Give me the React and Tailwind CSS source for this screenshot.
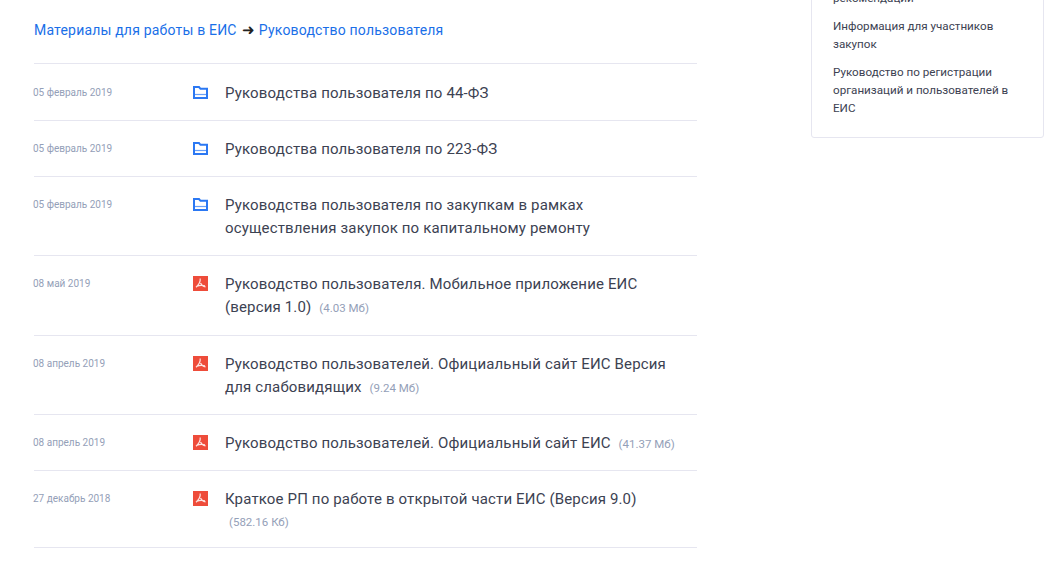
import React from 'react';

const rows = [
  { date: '05 февраль 2019', type: 'folder', title: 'Руководства пользователя по 44-ФЗ', pad: 'pt-[18px] pb-[15px]' },
  { date: '05 февраль 2019', type: 'folder', title: 'Руководства пользователя по 223-ФЗ', pad: 'pt-[17px] pb-[16px]' },
  {
    date: '05 февраль 2019',
    type: 'folder',
    title: 'Руководства пользователя по закупкам в рамках осуществления закупок по капитальному ремонту',
    pad: 'pt-[17px] pb-[16px]',
  },
  { date: '08 май 2019', type: 'pdf', title: 'Руководство пользователя. Мобильное приложение ЕИС (версия 1.0)', size: '(4.03 Мб)', pad: 'pt-[17px] pb-[17px]' },
  { date: '08 апрель 2019', type: 'pdf', title: 'Руководство пользователей. Официальный сайт ЕИС Версия для слабовидящих', size: '(9.24 Мб)', pad: 'pt-[17px] pb-[16px]' },
  { date: '08 апрель 2019', type: 'pdf', title: 'Руководство пользователей. Официальный сайт ЕИС', size: '(41.37 Мб)', pad: 'pt-[17px] pb-[15px]' },
  { date: '27 декабрь 2018', type: 'pdf', title: 'Краткое РП по работе в открытой части ЕИС (Версия 9.0)', size: '(582.16 Кб)', pad: 'pt-[17px] pb-[14px]' },
];

const FolderIcon = () => (
  <svg width="15" height="13" viewBox="0 0 15 13" fill="none">
    <path d="M1 1h5l1.500 1.800H14V12H1z" stroke="#2b78f3" strokeWidth="2" />
    <path d="M1 8.500h13" stroke="#2b78f3" strokeWidth="1.200" opacity="0.7" />
  </svg>
);

const PdfIcon = () => (
  <svg width="15" height="15" viewBox="0 0 15 15">
    <rect width="15" height="15" fill="#ee4c3a" />
    <path d="M7.200 2.500c.4 3 -1.300 6 -4.200 8.800M7.500 7c1 2.200 2.500 3.500 5 3.800M3.500 10.500c2.500-1.300 5.500-1.500 8.500-.7" fill="none" stroke="#fff" strokeWidth="1.200" opacity="0.85" />
  </svg>
);

export default function App() {
  return (
    <div className="h-[569px] w-[1047px] overflow-hidden bg-white font-['Roboto',sans-serif]">
      <div className="flex items-start pl-[34px]">
        <main className="w-[663px] pt-[21px]">
          <div className="flex items-center text-[14px] leading-[18px] tracking-[0.19px] text-[#1a6fe8]">
            <a>Материалы для работы в ЕИС</a>
            <span className="ml-[5px] mr-[4px] text-[15px] leading-[18px] text-[#222]">➜</span>
            <a>Руководство пользователя</a>
          </div>
          <div className="mt-[24px] border-b border-[#e6e6f0]">
            {rows.map((row) => (
              <div key={row.title} className={`flex border-t border-[#e6e6f0] ${row.pad}`}>
                <div className="-ml-px w-[160px] pt-[4px] text-[10px] leading-[14px] text-[#94a0b8]">{row.date}</div>
                <div className={row.type === 'folder' ? 'w-[32px] pt-[4px]' : 'w-[32px] pt-[3px]'}>
                  {row.type === 'folder' ? <FolderIcon /> : <PdfIcon />}
                </div>
                <div className="w-[450px] text-[15px] leading-[22.5px] tracking-[0.15px] text-[#3c4252]">
                  {row.title}{' '}
                  {row.size && <span className="ml-[4px] text-[11.5px] leading-none tracking-normal text-[#94a0b8]">{row.size}</span>}
                </div>
              </div>
            ))}
          </div>
        </main>
        <aside className="ml-[114px] -mt-[12px] h-[150px] w-[233px] rounded-[3px] border border-[#e6e6f0] px-[21px] text-[11.65px] leading-[18px] text-[#3c4252]">
          <p>рекомендации</p>
          <p className="mt-[10px]">Информация для участников закупок</p>
          <p className="mt-[10px]">Руководство по регистрации организаций и пользователей в ЕИС</p>
        </aside>
      </div>
    </div>
  );
}
